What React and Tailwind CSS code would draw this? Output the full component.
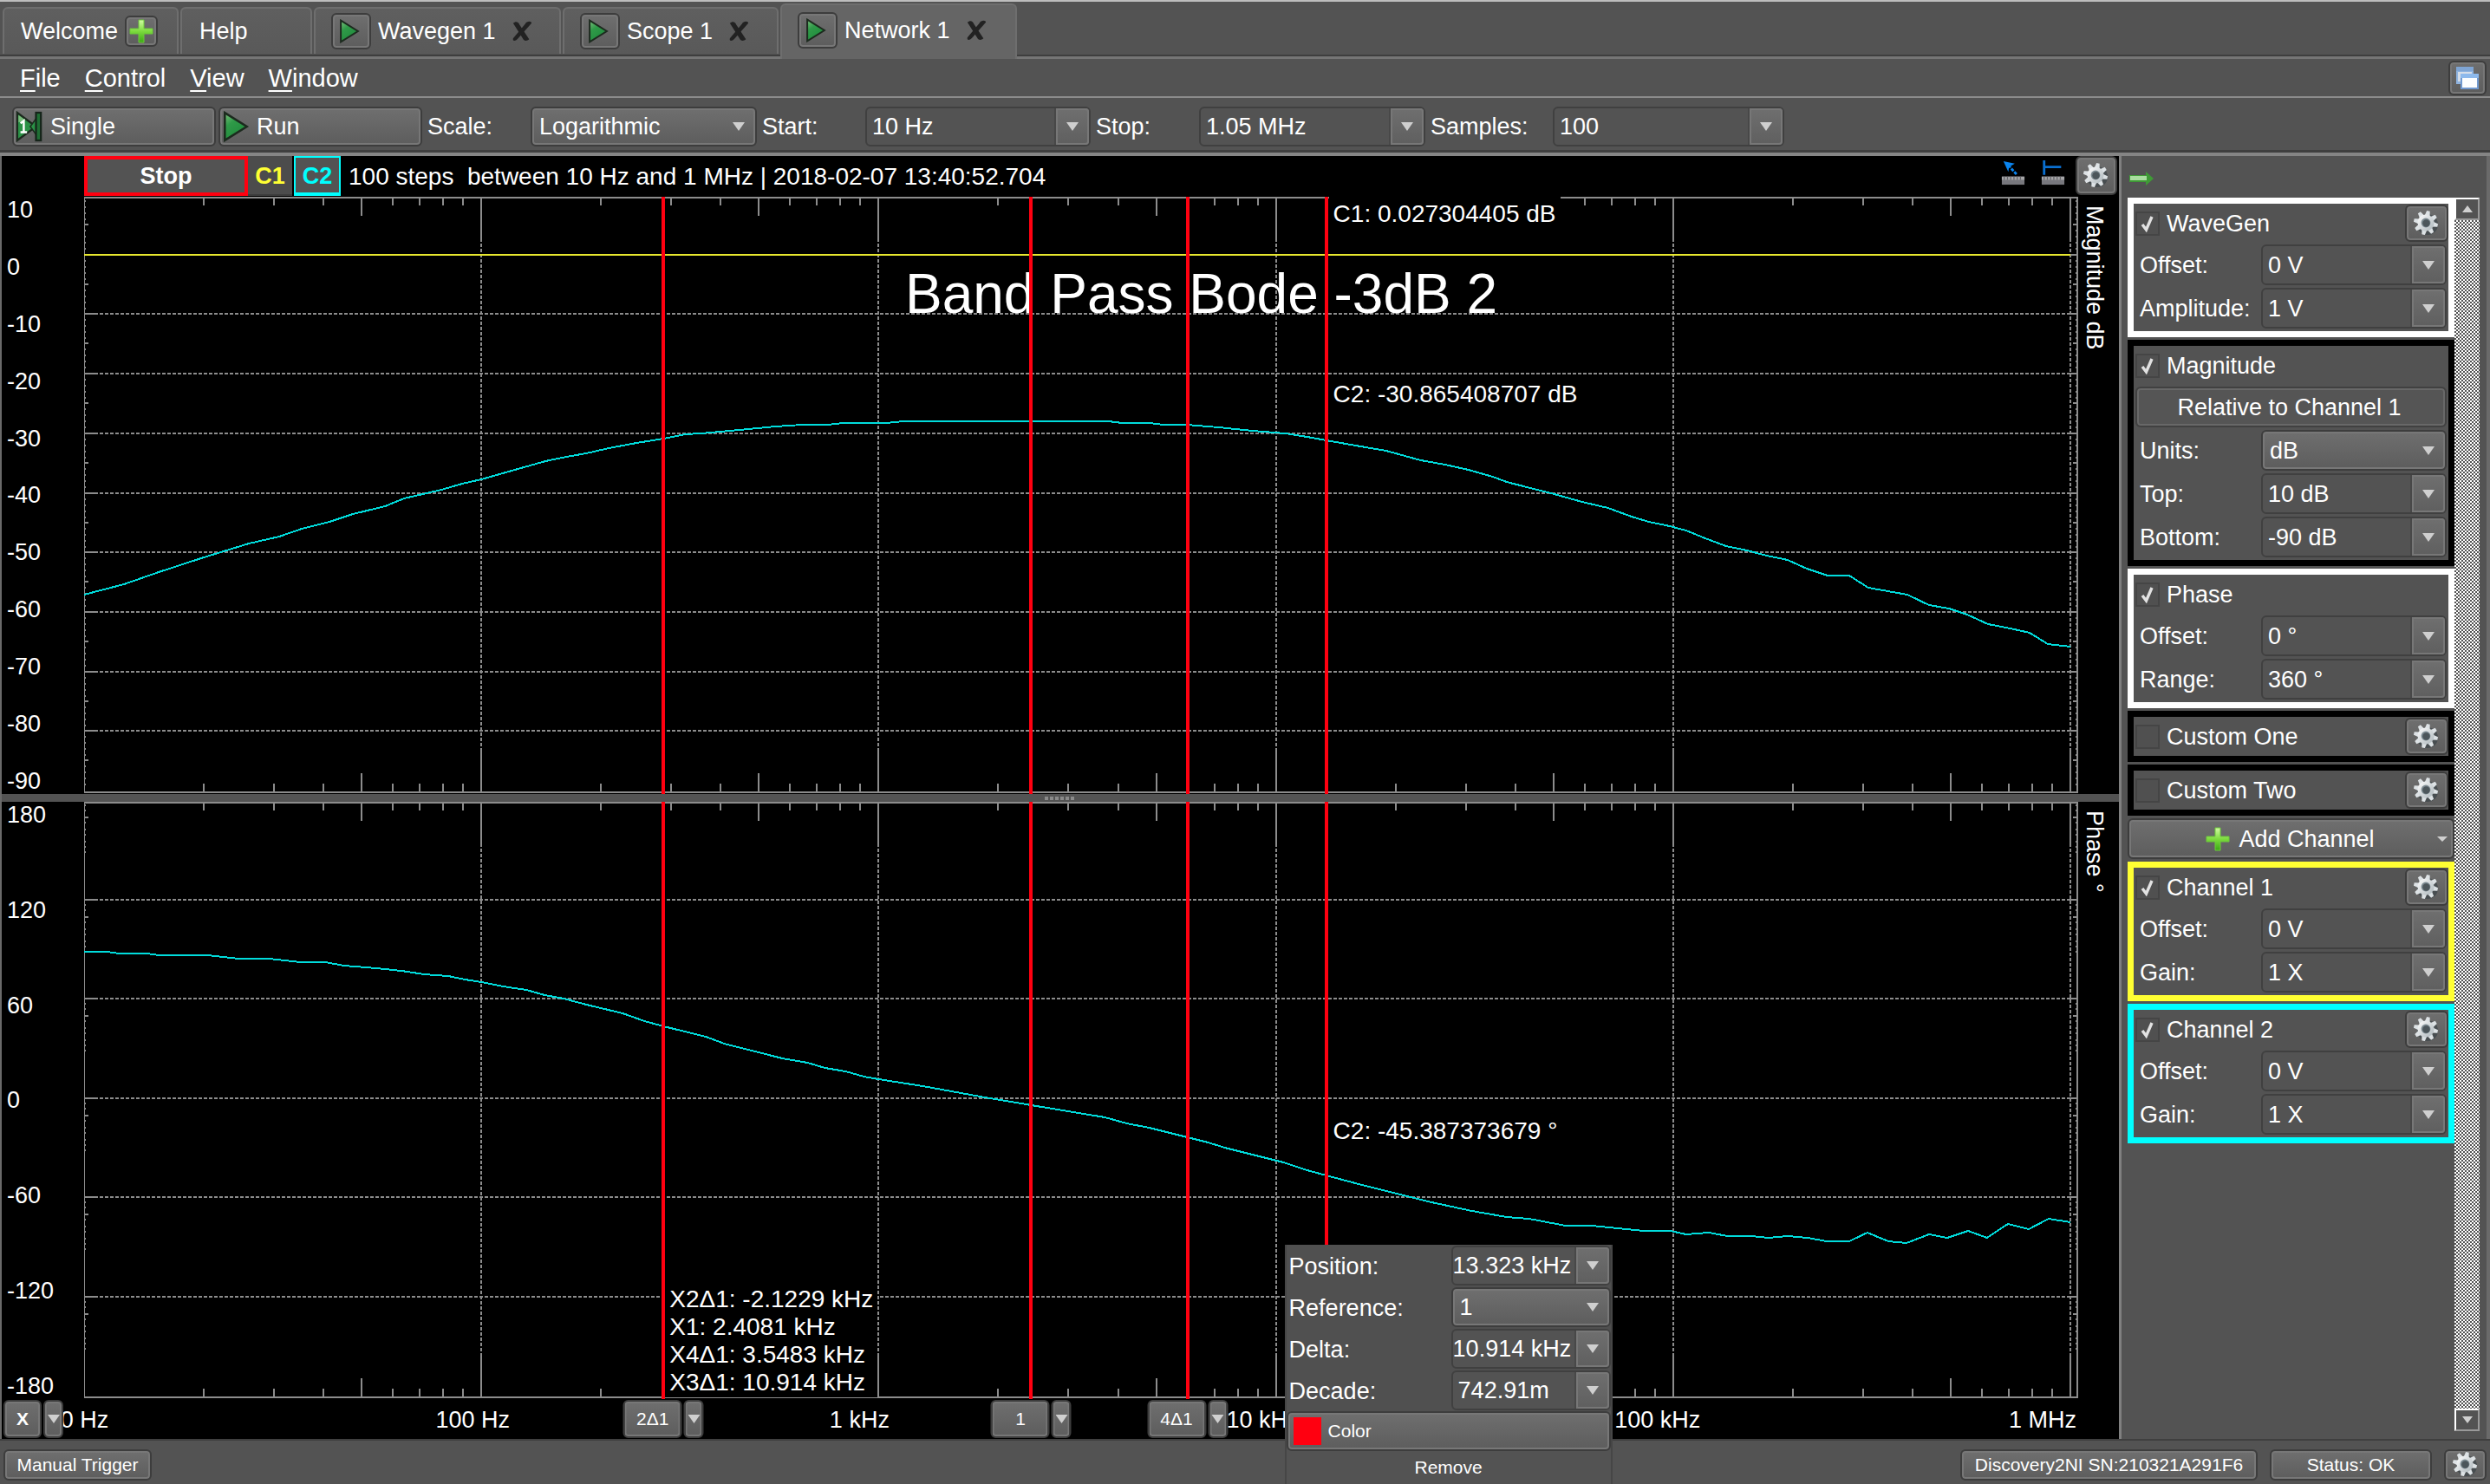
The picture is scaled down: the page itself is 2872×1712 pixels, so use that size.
import React, { useId } from "react";

const PLOT_W = 2299;
const PLOT_H = 689;
const DECADE = 458;

const MAGNITUDE =
  "0,459 46,447 86,433 135,417 190,400 225,392 251,383 283,375 310,366 347,357 369,348 412,338 436,331 458,326 493,316 532,305 556,300 579,296 605,290 637,284 668,279 693,274 711,273 733,271 766,268 797,265 828,263 857,263 875,261 925,261 945,259 1181,259 1197,261 1229,261 1244,263 1271,263 1308,266 1347,270 1385,273 1410,277 1432,281 1466,287 1501,293 1541,304 1569,309 1596,315 1624,323 1640,329 1695,343 1727,352 1757,359 1784,369 1804,375 1828,380 1847,385 1869,394 1893,403 1917,408 1940,414 1964,419 1986,429 2010,437 2035,437 2057,451 2102,459 2127,471 2150,475 2171,482 2195,493 2221,498 2243,503 2264,516 2290,519";

const PHASE =
  "0,173 27,173 40,175 73,175 86,177 142,177 178,181 213,181 249,185 278,185 300,189 337,192 366,195 392,199 420,201 439,205 458,208 483,213 510,217 531,223 553,227 579,234 621,244 646,253 668,259 717,271 738,279 805,296 834,301 854,307 878,311 899,317 916,320 967,328 1033,340 1092,350 1177,364 1202,371 1228,376 1272,387 1296,393 1315,399 1383,416 1410,425 1432,431 1477,443 1501,449 1525,455 1549,461 1572,466 1600,472 1640,479 1666,481 1708,489 1738,489 1798,495 1829,495 1847,499 1873,497 1895,501 1922,501 1942,503 1964,501 1987,503 2009,507 2035,507 2056,497 2080,507 2101,509 2127,499 2148,503 2172,495 2194,503 2218,487 2242,493 2265,481 2290,485";

const CURSORS = [668, 1092, 1272, 1432];

const pct = (value, total) => `${(value / total) * 100}%`;

const RAISED =
  "rounded-md border-2 border-[#3d3d3d] bg-linear-to-b from-[#6f6f6f] to-[#5d5d5d] shadow-[inset_0_0_0_2px_#777777]";

/* ---------- icons ---------- */

function Gear() {
  const id = useId();
  return (
    <svg viewBox="0 0 32 32" className="size-8" aria-hidden="true">
      <defs>
        <linearGradient id={id} x1="0" y1="0" x2="1" y2="1">
          <stop offset="0" stopColor="#ffffff" />
          <stop offset="1" stopColor="#aab4b9" />
        </linearGradient>
      </defs>
      <circle cx="17" cy="17" r="12" fill="#3f474b" opacity="0.75" />
      <g fill="#dde2e5">
        {[0, 45, 90, 135, 180, 225, 270, 315].map((a) => (
          <path key={a} d="M12 7 L13.2 1 H16.8 L18 7 Z" transform={`rotate(${a + 12} 15 15)`} />
        ))}
      </g>
      <circle cx="15" cy="15" r="9.6" fill={`url(#${id})`} />
      <circle cx="15" cy="15" r="5.4" fill="#7c8a91" />
      <circle cx="15.5" cy="15.5" r="4.2" fill="#4c565b" />
    </svg>
  );
}

function Play({ className = "h-7 w-6" }) {
  const id = useId();
  return (
    <svg viewBox="0 0 28 34" className={className} aria-hidden="true">
      <defs>
        <linearGradient id={id} x1="0" y1="0" x2="0.6" y2="1">
          <stop offset="0" stopColor="#7fc27f" />
          <stop offset="0.4" stopColor="#2f9a48" />
          <stop offset="1" stopColor="#1f8a3c" />
        </linearGradient>
      </defs>
      <path d="M2 2 L26 17 L2 32 Z" fill={`url(#${id})`} stroke="#1c2a1e" strokeWidth="2.4" />
    </svg>
  );
}

function SingleRun() {
  return (
    <svg viewBox="0 0 34 38" className="h-9 w-8" aria-hidden="true">
      <path d="M2 2 L25 19 L2 36 Z" fill="#2b9146" stroke="#1c2a1e" strokeWidth="2.4" />
      <path d="M26 8 V30 L18 19 Z" fill="#2b9146" stroke="#1c2a1e" strokeWidth="1.6" />
      <path d="M3.5 5 L12 11 L3.5 14 Z" fill="#79bb7b" />
      <rect x="25" y="2" width="6" height="34" fill="#1f6f34" stroke="#16241a" strokeWidth="2.4" />
      <path d="M6 15 L10 12 V26 M6 26 H14" fill="none" stroke="#ffffff" strokeWidth="2.6" />
    </svg>
  );
}

function Plus() {
  const id = useId();
  return (
    <svg viewBox="0 0 28 28" className="size-7" aria-hidden="true">
      <defs>
        <linearGradient id={id} x1="0" y1="0" x2="0" y2="1">
          <stop offset="0" stopColor="#d3fba4" />
          <stop offset="0.5" stopColor="#7ddb3e" />
          <stop offset="1" stopColor="#3aa814" />
        </linearGradient>
      </defs>
      <path d="M11 1 H17 V11 H27 V17 H17 V27 H11 V17 H1 V11 H11 Z" fill={`url(#${id})`} stroke="#6cc93a" strokeWidth="1" />
    </svg>
  );
}

function Cross() {
  return (
    <svg viewBox="0 0 26 26" className="size-6" aria-hidden="true">
      <path d="M2 3 C5 0 9 1 10 5 L22 23 C19 26 15 25 14 22 Z" fill="#222222" />
      <path d="M17 4 C19 0 25 0 25 3 L9 21 C5 26 1 26 2 22 Z" fill="#222222" />
    </svg>
  );
}

function Windows() {
  return (
    <svg viewBox="0 0 28 28" className="size-7" aria-hidden="true">
      <rect x="1" y="1" width="20" height="20" fill="#8fb3df" />
      <rect x="1" y="1" width="20" height="5" fill="#7fa5d4" />
      <rect x="3" y="7" width="16" height="11" fill="#d5dde8" />
      <rect x="6" y="9" width="21" height="18" fill="#6f98cf" />
      <rect x="6" y="9" width="21" height="5" fill="#8db9ec" />
      <rect x="8" y="14" width="17" height="11" fill="#fbfdff" />
    </svg>
  );
}

function Ruler({ kind }) {
  return (
    <svg viewBox="0 0 30 32" className="h-8 w-7" aria-hidden="true">
      <rect x="1" y="20" width="28" height="10" fill="#77777d" />
      <rect x="1" y="20" width="28" height="4" fill="#a5a5a8" />
      <path d="M4 20 v4 M8 20 v4 M12 20 v4 M16 20 v4 M20 20 v4 M24 20 v4" stroke="#66666a" strokeWidth="1.4" />
      {kind === "pointer" ? (
        <g fill="#0a84ee">
          <path d="M3 1 L17 4 L12 7 L10 8 L9 14 Z" />
          <path d="M9 6 L20 18" stroke="#0a84ee" strokeWidth="3" strokeDasharray="4 1.5" />
        </g>
      ) : (
        <path d="M4 0 V18 M4 8 H25" stroke="#0a6fd0" strokeWidth="3" />
      )}
    </svg>
  );
}

function Down({ className = "h-2.5 w-3.5" }) {
  return (
    <svg viewBox="0 0 16 11" preserveAspectRatio="none" className={className} aria-hidden="true">
      <path d="M0 0 H16 L8 11 Z" fill="#cfcfcf" />
    </svg>
  );
}

/* ---------- controls ---------- */

function Combo({ id, label, value, className = "", tight = false }) {
  return (
    <div className={`flex h-[46px] rounded-md border-2 border-[#404040] bg-[#535353] ${className}`}>
      <input
        id={id}
        aria-label={label}
        defaultValue={value}
        className={`w-full min-w-0 flex-1 bg-transparent outline-none ${tight ? "pl-0" : "pl-1.5"}`}
      />
      <button
        type="button"
        aria-label={`${label} options`}
        className="grid w-10 shrink-0 place-items-center rounded-r-sm border-l-2 border-[#484848] bg-linear-to-b from-[#6f6f6f] to-[#5f5f5f] shadow-[inset_0_0_0_2px_#777777]"
      >
        <Down />
      </button>
    </div>
  );
}

function Select({ id, label, value, className = "" }) {
  return (
    <div className={`grid h-[46px] items-stretch ${RAISED} ${className}`}>
      <select
        id={id}
        aria-label={label}
        defaultValue={value}
        className="col-start-1 row-start-1 appearance-none bg-transparent pl-2 outline-none"
      >
        <option>{value}</option>
      </select>
      <span className="pointer-events-none col-start-1 row-start-1 mr-3 grid place-items-center justify-self-end">
        <Down />
      </span>
    </div>
  );
}

function GearButton({ label, className = "h-[43px] w-[50px]" }) {
  return (
    <button type="button" aria-label={label} className={`grid shrink-0 place-items-center ${RAISED} ${className}`}>
      <Gear />
    </button>
  );
}

function Group({ title, border, checked = true, gear = true, children }) {
  const id = useId();
  return (
    <section className={`border-[7px] ${border}`}>
      <div className="flex h-[45px] items-center pl-0.5">
        <span className="grid size-7 place-items-center">
          <input
            id={id}
            type="checkbox"
            defaultChecked={checked}
            className="peer col-start-1 row-start-1 size-full appearance-none border-2 border-[#454545] bg-[#505050]"
          />
          <svg viewBox="0 0 16 20" className="pointer-events-none invisible col-start-1 row-start-1 h-5 w-4 peer-checked:visible" aria-hidden="true">
            <path d="M2 11 L6.5 17 L13 2" fill="none" stroke="#e2e2e2" strokeWidth="3.4" />
          </svg>
        </span>
        <label htmlFor={id} className="flex-1 pt-px pl-2">
          {title}
        </label>
        {gear && <GearButton label={`${title} settings`} />}
      </div>
      {children && <div className="flex flex-col gap-[3px] pt-0.5 pr-0.5 pb-[3px]">{children}</div>}
    </section>
  );
}

function Row({ label, value, select = false }) {
  const id = useId();
  const Field = select ? Select : Combo;
  return (
    <div className="flex items-center">
      <label htmlFor={id} className="w-[147px] pt-px pl-[7px]">
        {label}:
      </label>
      <Field id={id} label={label} value={value} className="h-[47px] min-w-0 flex-1" />
    </div>
  );
}

function Tab({ title, width, active = false, children }) {
  return (
    <div
      className={`flex items-center rounded-t-md border-x-2 border-t-2 border-[#6e6e6e] ${width} ${
        active ? "h-16 bg-[#656565] pb-1" : "mb-[6px] h-[54px] bg-linear-to-b from-[#5f5f5f] to-[#595959]"
      }`}
    >
      {children ?? (
        <>
          <button type="button" aria-label={`Run ${title}`} className={`ml-[18px] grid h-[42px] w-[46px] place-items-center pr-1 ${RAISED}`}>
            <Play />
          </button>
          <button type="button" className="ml-2">
            {title}
          </button>
          <button type="button" aria-label={`Close ${title}`} className="ml-[18px]">
            <Cross />
          </button>
        </>
      )}
    </div>
  );
}

/* ---------- plots ---------- */

function Grid({ rows, ticks }) {
  const step = 687 / rows;
  const bottom = PLOT_H - 2;
  const lineY = (r) => Math.round(r * step) - 2;
  const vertical = [];
  for (let d = 0; d < 5; d += 1) {
    for (let n = 2; n < 10; n += 1) {
      const x = Math.round(d * DECADE + Math.log10(n) * DECADE);
      const len = n === 5 ? 22 : 10;
      vertical.push(`M${x} 0 v${len} M${x} ${bottom} v${-len}`);
    }
    const x = (d + 1) * DECADE;
    vertical.push(`M${x} 0 v48 M${x} ${bottom} v-48`);
  }
  const side = [];
  for (let r = 0; r < rows; r += 1) {
    const y = lineY(r);
    if (r > 0) side.push(`M0 ${y} h12 M2286 ${y} h13`);
    ticks.forEach(([offset, len]) => {
      const ty = y + offset;
      side.push(`M0 ${ty} h${len} M2298 ${ty} h${-len}`);
    });
  }
  return (
    <g fill="none" stroke="#8c8c8c" strokeWidth="2" shapeRendering="crispEdges">
      <path d={`M0 1 H2298 V${bottom} H0 Z`} />
      <path d={vertical.join(" ")} />
      <path d={side.join(" ")} />
      {Array.from({ length: rows - 1 }, (_, i) => (
        <path key={i} strokeDasharray="4 2" d={`M12 ${lineY(i + 1)} H2286`} />
      ))}
      {[1, 2, 3, 4, 5].map((d) => (
        <path key={d} strokeDasharray="4 2" d={`M${d * DECADE} 48 V${bottom - 48}`} />
      ))}
    </g>
  );
}

function Plot({ name, scale, rows, ticks, curve, flat, children }) {
  return (
    <div className="flex min-h-[360px] flex-1 basis-0 bg-black">
      <ol className="flex w-[95px] shrink-0 flex-col justify-between pl-1.5 leading-[30px]">
        {scale.map((s) => (
          <li key={s}>{s}</li>
        ))}
      </ol>
      <div className="relative min-w-0 flex-1">
        <svg viewBox={`0 0 ${PLOT_W} ${PLOT_H}`} preserveAspectRatio="none" className="absolute inset-0 size-full">
          <Grid rows={rows} ticks={ticks} />
          {flat && <path d={`M0 ${flat} H2290`} stroke="#e6e62e" strokeWidth="2" shapeRendering="crispEdges" />}
          <polyline points={curve} fill="none" stroke="#00dcdc" strokeWidth="2" shapeRendering="crispEdges" />
        </svg>
        {children}
      </div>
      <div className="w-[47px] shrink-0 pt-2.5 pr-3 leading-8 [writing-mode:vertical-rl]">{name}</div>
    </div>
  );
}

function Cursors() {
  return CURSORS.map((x) => (
    <span key={x} className="absolute inset-y-0 w-1 -translate-x-1/2 bg-[#ff0010]" style={{ left: pct(x, PLOT_W) }} />
  ));
}

function Readout({ x, y, className = "h-8", children }) {
  return (
    <div
      className={`absolute flex flex-col justify-center bg-black px-[5px] text-[28px] leading-8 whitespace-nowrap ${className}`}
      style={{ left: pct(x, PLOT_W), top: pct(y, PLOT_H) }}
    >
      {children}
    </div>
  );
}

function AxisButton({ text, className = "" }) {
  return (
    <div className={`flex h-11 gap-0.5 ${className}`}>
      <button type="button" className={`text-[21px] ${text === "X" ? "w-11 font-bold" : "w-[68px]"} ${RAISED}`}>
        {text}
      </button>
      <button type="button" aria-label={`${text} menu`} className={`grid w-[23px] place-items-center ${RAISED}`}>
        <Down />
      </button>
    </div>
  );
}

const AXIS_LABELS = [
  ["10 Hz", 0, "-translate-x-[60%]"],
  ["100 Hz", 448, "-translate-x-1/2"],
  ["1 kHz", 894, "-translate-x-1/2"],
  ["10 kHz", 1359, "-translate-x-1/2"],
  ["100 kHz", 1814, "-translate-x-1/2"],
  ["1 MHz", 2258, "-translate-x-1/2"],
];

const MENU = ["File", "Control", "View", "Window"];

const TEN = [
  [7, 2], [14, 2], [21, 2], [28, 2], [34, 5], [41, 2], [48, 2], [55, 2], [62, 2],
];
const SIXTY = [
  [6, 2], [12, 2], [20, 5], [26, 2], [34, 2], [40, 2], [48, 2], [54, 2], [60, 2],
];

const POPUP = [
  ["Position", "13.323 kHz", Combo, true],
  ["Reference", "1", Select],
  ["Delta", "10.914 kHz", Combo, true],
  ["Decade", "742.91m", Combo],
];

export default function App() {
  return (
    <div className="relative flex min-h-screen flex-col overflow-hidden border-t-2 border-[#bdbdbd] bg-[#535353] font-['Liberation_Sans',Arial,sans-serif] text-[27px] leading-8 text-white">
      {/* tab strip */}
      <div className="flex h-[66px] items-end gap-0.5 bg-[linear-gradient(to_top,#757575_3px,#3e3e3e_3px,#3e3e3e_5px,transparent_5px)] pl-[3px]">
        <Tab width="w-[203px]">
          <button type="button" className="ml-[19px]">
            Welcome
          </button>
          <button type="button" aria-label="New instrument" className={`ml-2 grid h-9 w-[38px] place-items-center ${RAISED}`}>
            <Plus />
          </button>
        </Tab>
        <Tab width="w-[152px]">
          <button type="button" className="ml-5">
            Help
          </button>
        </Tab>
        <Tab width="w-[285px]" title="Wavegen 1" />
        <Tab width="w-[249px]" title="Scope 1" />
        <Tab width="w-[273px]" title="Network 1" active />
      </div>

      {/* menu bar */}
      <nav className="flex h-[45px] items-center justify-between border-b-2 border-[#8c8c8c] pr-1 pl-[23px]">
        <div className="flex gap-7 text-[29px]">
          {MENU.map((m) => (
            <button key={m} type="button">
              <span className="underline decoration-2 underline-offset-4">{m[0]}</span>
              {m.slice(1)}
            </button>
          ))}
        </div>
        <button type="button" aria-label="Cascade windows" className={`grid h-10 w-11 place-items-center ${RAISED}`}>
          <Windows />
        </button>
      </nav>

      {/* toolbar */}
      <div className="flex h-[67px] shrink-0 items-center border-b-4 border-[#858585] pt-0.5 pl-3.5 shadow-[inset_0_-3px_0_#3f3f3f]">
        <button type="button" className={`flex h-[46px] w-[235px] items-center gap-2 pl-0.5 ${RAISED}`}>
          <SingleRun />
          Single
        </button>
        <button type="button" className={`ml-[3px] flex h-[46px] w-[235px] items-center gap-2 pl-0.5 ${RAISED}`}>
          <Play className="h-9 w-8" />
          Run
        </button>
        <label htmlFor="scale" className="ml-1.5 w-[119px]">
          Scale:
        </label>
        <Select id="scale" label="Scale" value="Logarithmic" className="w-[261px]" />
        <label htmlFor="start" className="ml-1.5 w-[119px]">
          Start:
        </label>
        <Combo id="start" label="Start" value="10 Hz" className="w-[260px]" />
        <label htmlFor="stop" className="ml-1.5 w-[119px]">
          Stop:
        </label>
        <Combo id="stop" label="Stop" value="1.05 MHz" className="w-[261px]" />
        <label htmlFor="samples" className="ml-1.5 w-[141px]">
          Samples:
        </label>
        <Combo id="samples" label="Samples" value="100" className="w-[267px]" />
      </div>

      <div className="flex flex-1 border-r-4 border-l-2 border-[#6a6a6a]">
        {/* chart area */}
        <main className="flex min-w-0 flex-1 flex-col bg-black">
          <div className="flex h-[47px] shrink-0 items-center pl-[95px]">
            <button type="button" className="h-[46px] w-[189px] self-start border-4 border-[#ff0010] bg-[#535353] font-bold">
              Stop
            </button>
            <button type="button" className="h-[46px] w-[51px] self-start border-b-2 border-[#3d3d3d] bg-[#4c4c4c] pt-0.5 font-bold text-[#ffff33]">
              C1
            </button>
            <button type="button" className="ml-0.5 h-[46px] w-[54px] self-start border-2 border-b-4 border-[#00ffff] bg-[#535353] pt-0.5 font-bold text-[#00ffff]">
              C2
            </button>
            <p className="ml-[9px] flex-1 text-[28px] whitespace-pre">100 steps  between 10 Hz and 1 MHz | 2018-02-07 13:40:52.704</p>
            <button type="button" aria-label="Pointer measure" className="mr-[18px] mb-2">
              <Ruler kind="pointer" />
            </button>
            <button type="button" aria-label="Axis measure" className="mr-3 mb-2">
              <Ruler kind="axis" />
            </button>
            <GearButton label="Plot settings" className="mr-0.5 mb-0.5 h-[45px] w-12" />
          </div>

          <Plot
            name="Magnitude dB"
            rows={10}
            ticks={TEN}
            curve={MAGNITUDE}
            flat={67}
            scale={["10", "0", "-10", "-20", "-30", "-40", "-50", "-60", "-70", "-80", "-90"]}
          >
            <h1
              className="absolute -translate-1/2 text-[64px] leading-none whitespace-nowrap"
              style={{ left: pct(1288, PLOT_W), top: pct(112, PLOT_H) }}
            >
              Band Pass Bode -3dB 2
            </h1>
            <Cursors />
            <Readout x={1435} y={0} className="h-10">
              C1: 0.027304405 dB
            </Readout>
            <Readout x={1435} y={212}>
              C2: -30.865408707 dB
            </Readout>
          </Plot>

          <div className="grid h-[9px] shrink-0 place-items-center bg-[#535353]">
            <span className="h-1 w-9 bg-[repeating-linear-gradient(to_right,#8a8a8a_0_4px,transparent_4px_6px)]" />
          </div>

          <Plot
            name="Phase °"
            rows={6}
            ticks={SIXTY}
            curve={PHASE}
            scale={["180", "120", "60", "0", "-60", "-120", "-180"]}
          >
            <Cursors />
            <Readout x={1435} y={364}>
              C2: -45.387373679 °
            </Readout>
            <Readout x={670} y={557} className="h-[130px]">
              <span>X2Δ1: -2.1229 kHz</span>
              <span>X1: 2.4081 kHz</span>
              <span>X4Δ1: 3.5483 kHz</span>
              <span>X3Δ1: 10.914 kHz</span>
            </Readout>
          </Plot>

          <div className="flex h-[46px] shrink-0 items-center pr-[47px] pl-0.5">
            <AxisButton text="X" className="relative z-10 w-[93px] shrink-0" />
            <div className="relative h-full min-w-0 flex-1">
              {AXIS_LABELS.map(([text, x, shift]) => (
                <span key={text} className={`absolute top-2 whitespace-nowrap ${shift}`} style={{ left: pct(x, PLOT_W) }}>
                  {text}
                </span>
              ))}
              {["2Δ1", "1", "4Δ1"].map((t, i) => (
                <div key={t} className="absolute top-px -translate-x-1/2" style={{ left: pct(CURSORS[i], PLOT_W) }}>
                  <AxisButton text={t} />
                </div>
              ))}
              {/* cursor popup */}
              <div
                className="absolute -top-[178px] z-20 flex h-[276px] w-[378px] flex-col border-x-2 border-[#464646] bg-[#535353]"
                style={{ left: pct(1384, PLOT_W) }}
              >
                {POPUP.map(([label, value, Field, tight]) => (
                  <div key={label} className="flex h-12 shrink-0 items-center bg-[#505050]">
                    <label htmlFor={`cursor-${label}`} className="w-[190px] pt-0.5 pl-[3px]">
                      {label}:
                    </label>
                    <Field id={`cursor-${label}`} label={label} value={value} tight={tight} className="min-w-0 flex-1" />
                  </div>
                ))}
                <button type="button" className={`flex h-[46px] shrink-0 items-center gap-2 pl-1.5 text-[21px] ${RAISED}`}>
                  <span className="size-8 bg-[#ff0010]" />
                  Color
                </button>
                <button type="button" className="flex-1 text-[21px]">
                  Remove
                </button>
              </div>
            </div>
          </div>
        </main>

        {/* side panel */}
        <aside className="flex w-[424px] shrink-0 flex-col border-l-3 border-[#808080] pr-2 pl-[7px]">
          <div className="flex h-12 shrink-0 items-center pt-1">
            <button type="button" aria-label="Collapse panel">
              <svg viewBox="0 0 32 20" className="h-5 w-8" aria-hidden="true">
                <path d="M2 6 H21 V2 L30 10 L21 18 V14 H2 Z" fill="#3f9a36" />
                <path d="M3 7 H22 V12 H3 Z" fill="#a9dd9f" />
              </svg>
            </button>
          </div>
          <div className="flex flex-1 pb-[9px]">
            <div className="flex min-w-0 flex-1 flex-col gap-[3px]">
              <Group title="WaveGen" border="border-white">
                <Row label="Offset" value="0 V" />
                <Row label="Amplitude" value="1 V" />
              </Group>
              <Group title="Magnitude" border="border-black" gear={false}>
                <button type="button" className="ml-0.5 h-[47px] rounded-md border-2 border-[#414141] bg-[#555555] pr-1 shadow-[inset_0_0_0_2px_#686868]">
                  Relative to Channel 1
                </button>
                <Row label="Units" value="dB" select />
                <Row label="Top" value="10 dB" />
                <Row label="Bottom" value="-90 dB" />
              </Group>
              <Group title="Phase" border="border-white" gear={false}>
                <Row label="Offset" value="0 °" />
                <Row label="Range" value="360 °" />
              </Group>
              <Group title="Custom One" border="border-black" checked={false} />
              <Group title="Custom Two" border="border-black" checked={false} />
              <button type="button" className={`flex h-[47px] items-center ${RAISED}`}>
                <span className="flex flex-1 items-center justify-center gap-2.5 pl-4">
                  <Plus />
                  Add Channel
                </span>
                <Down className="mr-1.5 h-1.5 w-3" />
              </button>
              <Group title="Channel 1" border="border-[#ffff33]">
                <Row label="Offset" value="0 V" />
                <Row label="Gain" value="1 X" />
              </Group>
              <Group title="Channel 2" border="border-[#00ffff]">
                <Row label="Offset" value="0 V" />
                <Row label="Gain" value="1 X" />
              </Group>
            </div>
            <div className="flex w-[29px] flex-col">
              <button type="button" aria-label="Scroll up" className="grid h-[26px] place-items-center border-2 border-white border-r-[#999999] border-b-[#999999]">
                <Down className="h-2 w-3 rotate-180" />
              </button>
              <div className="flex-1 bg-[repeating-conic-gradient(#ffffff_0_25%,#535353_0_50%)] bg-[length:4px_4px]" />
              <button type="button" aria-label="Scroll down" className="grid h-[26px] place-items-center border-2 border-white border-r-[#999999] border-b-[#999999]">
                <Down className="h-2 w-3" />
              </button>
            </div>
          </div>
        </aside>
      </div>

      {/* status bar */}
      <footer className="flex h-[52px] shrink-0 items-center border-t-2 border-[#3f3f3f] pt-1.5 pr-1 pl-1 text-[21px]">
        <button type="button" className={`h-9 w-[171px] ${RAISED}`}>
          Manual Trigger
        </button>
        <span className="flex-1" />
        <button type="button" className={`h-9 w-[343px] ${RAISED}`}>
          Discovery2NI SN:210321A291F6
        </button>
        <button type="button" className={`ml-3.5 h-9 w-[187px] ${RAISED}`}>
          Status: OK
        </button>
        <GearButton label="Device settings" className="ml-3.5 h-9 w-[49px]" />
      </footer>
    </div>
  );
}
